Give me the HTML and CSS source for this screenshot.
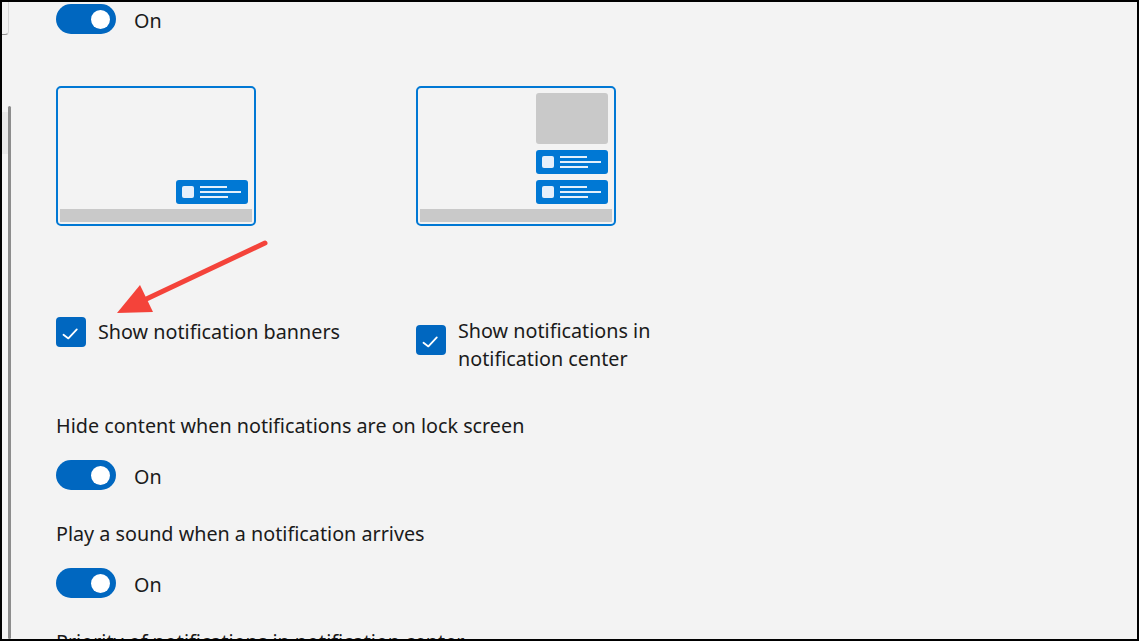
FILE: index.html
```html
<!DOCTYPE html>
<html lang="en">
<head>
    <meta charset="UTF-8">
    <meta name="viewport" content="width=device-width, initial-scale=1.0">
    <title>Notifications</title>
    <link rel="stylesheet" href="styles.css">
</head>
<body>
    <div class="frame">
        <div class="corner"></div>
        <div class="scroll-shade"></div>
        <div class="scrollbar"></div>

        <div class="content">
            <div class="toggle-row first">
                <span class="toggle"><span class="knob"></span></span>
                <span class="state">On</span>
            </div>

            <div class="layouts">
                <div class="preview">
                    <div class="notif">
                        <span class="icon"></span>
                        <span class="lines"><i class="l1"></i><i class="l2"></i><i class="l3"></i></span>
                    </div>
                    <div class="taskbar"></div>
                </div>
                <div class="preview">
                    <div class="center-block"></div>
                    <div class="notif">
                        <span class="icon"></span>
                        <span class="lines"><i class="l1"></i><i class="l2"></i><i class="l3"></i></span>
                    </div>
                    <div class="notif">
                        <span class="icon"></span>
                        <span class="lines"><i class="l1"></i><i class="l2"></i><i class="l3"></i></span>
                    </div>
                    <div class="taskbar"></div>
                </div>
            </div>

            <div class="checks">
                <label class="check single">
                    <span class="box">
                        <svg width="30" height="30" viewBox="0 0 30 30"><path d="M7.5 17.8 L12.4 21.4 L20.8 12.4" fill="none" stroke="#fff" stroke-width="1.8" stroke-linecap="round" stroke-linejoin="round"/></svg>
                    </span>
                    <span class="check-text">Show notification banners</span>
                </label>
                <label class="check double">
                    <span class="box">
                        <svg width="30" height="30" viewBox="0 0 30 30"><path d="M7.5 17.8 L12.4 21.4 L20.8 12.4" fill="none" stroke="#fff" stroke-width="1.8" stroke-linecap="round" stroke-linejoin="round"/></svg>
                    </span>
                    <span class="check-text">Show notifications in<br>notification center</span>
                </label>
            </div>

            <div class="setting">
                <div class="setting-label">Hide content when notifications are on lock screen</div>
                <div class="toggle-row">
                    <span class="toggle"><span class="knob"></span></span>
                    <span class="state">On</span>
                </div>
            </div>

            <div class="setting">
                <div class="setting-label">Play a sound when a notification arrives</div>
                <div class="toggle-row">
                    <span class="toggle"><span class="knob"></span></span>
                    <span class="state">On</span>
                </div>
            </div>

            <div class="setting">
                <div class="setting-label">Priority of notifications in notification center</div>
            </div>
        </div>

        <!-- red annotation arrow -->
        <svg class="arrow" width="1139" height="641" viewBox="0 0 1139 641">
            <line x1="265" y1="243" x2="140" y2="302" stroke="#f4433a" stroke-width="5" stroke-linecap="round"/>
            <polygon points="117,313 140,285 153,312" fill="#f4433a"/>
        </svg>
    </div>
</body>
</html>
```

FILE: styles.css
```css
body {
    margin: 0;
    padding: 0;
    font-family: "Noto Sans", "Open Sans", sans-serif;
    color: #1b1b1b;
}

.frame {
    position: relative;
    width: 1139px;
    height: 641px;
    box-sizing: border-box;
    border: 2px solid #000;
    background-color: #f3f3f3;
    overflow: hidden;
}

.corner {
    position: absolute;
    left: 0;
    top: -2px;
    width: 6px;
    height: 34px;
    border-right: 1px solid #d6d6d6;
    border-bottom: 1px solid #8f8f8f;
    border-bottom-right-radius: 4px;
}

.scroll-shade {
    position: absolute;
    left: 0;
    top: 110px;
    width: 6px;
    height: 42px;
    background-color: #e9e9e9;
}

.scrollbar {
    position: absolute;
    left: 6px;
    top: 104px;
    bottom: 0;
    width: 3px;
    border-radius: 2px;
    background-color: #8c8c8c;
}

.content {
    padding-left: 54px;
    padding-top: 2px;
}

/* toggles */
.toggle-row {
    display: flex;
    align-items: center;
    height: 30px;
    margin-top: 20px;
}

.toggle-row.first {
    margin-top: 0;
}

.toggle {
    display: flex;
    justify-content: flex-end;
    align-items: center;
    width: 60px;
    height: 30px;
    box-sizing: border-box;
    padding-right: 6px;
    border-radius: 15px;
    background-color: #0067c0;
}

.knob {
    width: 19px;
    height: 19px;
    border-radius: 50%;
    background-color: #fff;
}

.state {
    margin-left: 18px;
    font-size: 19.75px;
    line-height: 28px;
    padding-top: 3px;
}

/* layout previews */
.layouts {
    display: grid;
    grid-template-columns: 200px 200px;
    column-gap: 160px;
    margin-top: 52px;
}

.preview {
    display: flex;
    flex-direction: column;
    align-items: flex-end;
    justify-content: flex-end;
    gap: 6px;
    height: 140px;
    box-sizing: border-box;
    padding: 2px;
    border: 2px solid #0078d4;
    border-radius: 5px;
}

.center-block {
    width: 72px;
    height: 51px;
    margin-right: 4px;
    border-radius: 3px;
    background-color: #c9c9c9;
}

.notif {
    display: flex;
    align-items: center;
    width: 72px;
    height: 24px;
    box-sizing: border-box;
    padding-left: 6px;
    margin-right: 4px;
    border-radius: 3px;
    background-color: #0078d4;
}

.notif .icon {
    width: 12px;
    height: 12px;
    border-radius: 2px;
    background-color: #e4f0fb;
}

.notif .lines {
    display: flex;
    flex-direction: column;
    gap: 3px;
    margin-left: 6px;
}

.notif .lines i {
    display: block;
    height: 2px;
    background-color: #e4f0fb;
}

.notif .l1 { width: 27px; }
.notif .l2 { width: 41px; }
.notif .l3 { width: 28px; }

.taskbar {
    align-self: stretch;
    height: 13px;
    margin-top: -1px;
    background-color: #c9c9c9;
}

/* checkboxes */
.checks {
    display: grid;
    grid-template-columns: 200px 400px;
    column-gap: 160px;
    align-items: start;
    margin-top: 91px;
}

.check {
    display: flex;
}

.check.single {
    align-items: center;
}

.check.double {
    align-items: flex-start;
}

.check.double .box {
    margin-top: 8px;
}

.box {
    display: block;
    flex: none;
    width: 30px;
    height: 30px;
    border-radius: 4px;
    background-color: #0067c0;
}

.box svg {
    display: block;
}

.check-text {
    margin-left: 12px;
    font-size: 19.75px;
    line-height: 28px;
    white-space: nowrap;
}

/* settings */
.setting {
    margin-top: 30px;
}

.checks + .setting {
    margin-top: 39px;
}

.setting-label {
    font-size: 19.75px;
    line-height: 28px;
    white-space: nowrap;
}

.arrow {
    position: absolute;
    left: -2px;
    top: -2px;
    pointer-events: none;
}
```
